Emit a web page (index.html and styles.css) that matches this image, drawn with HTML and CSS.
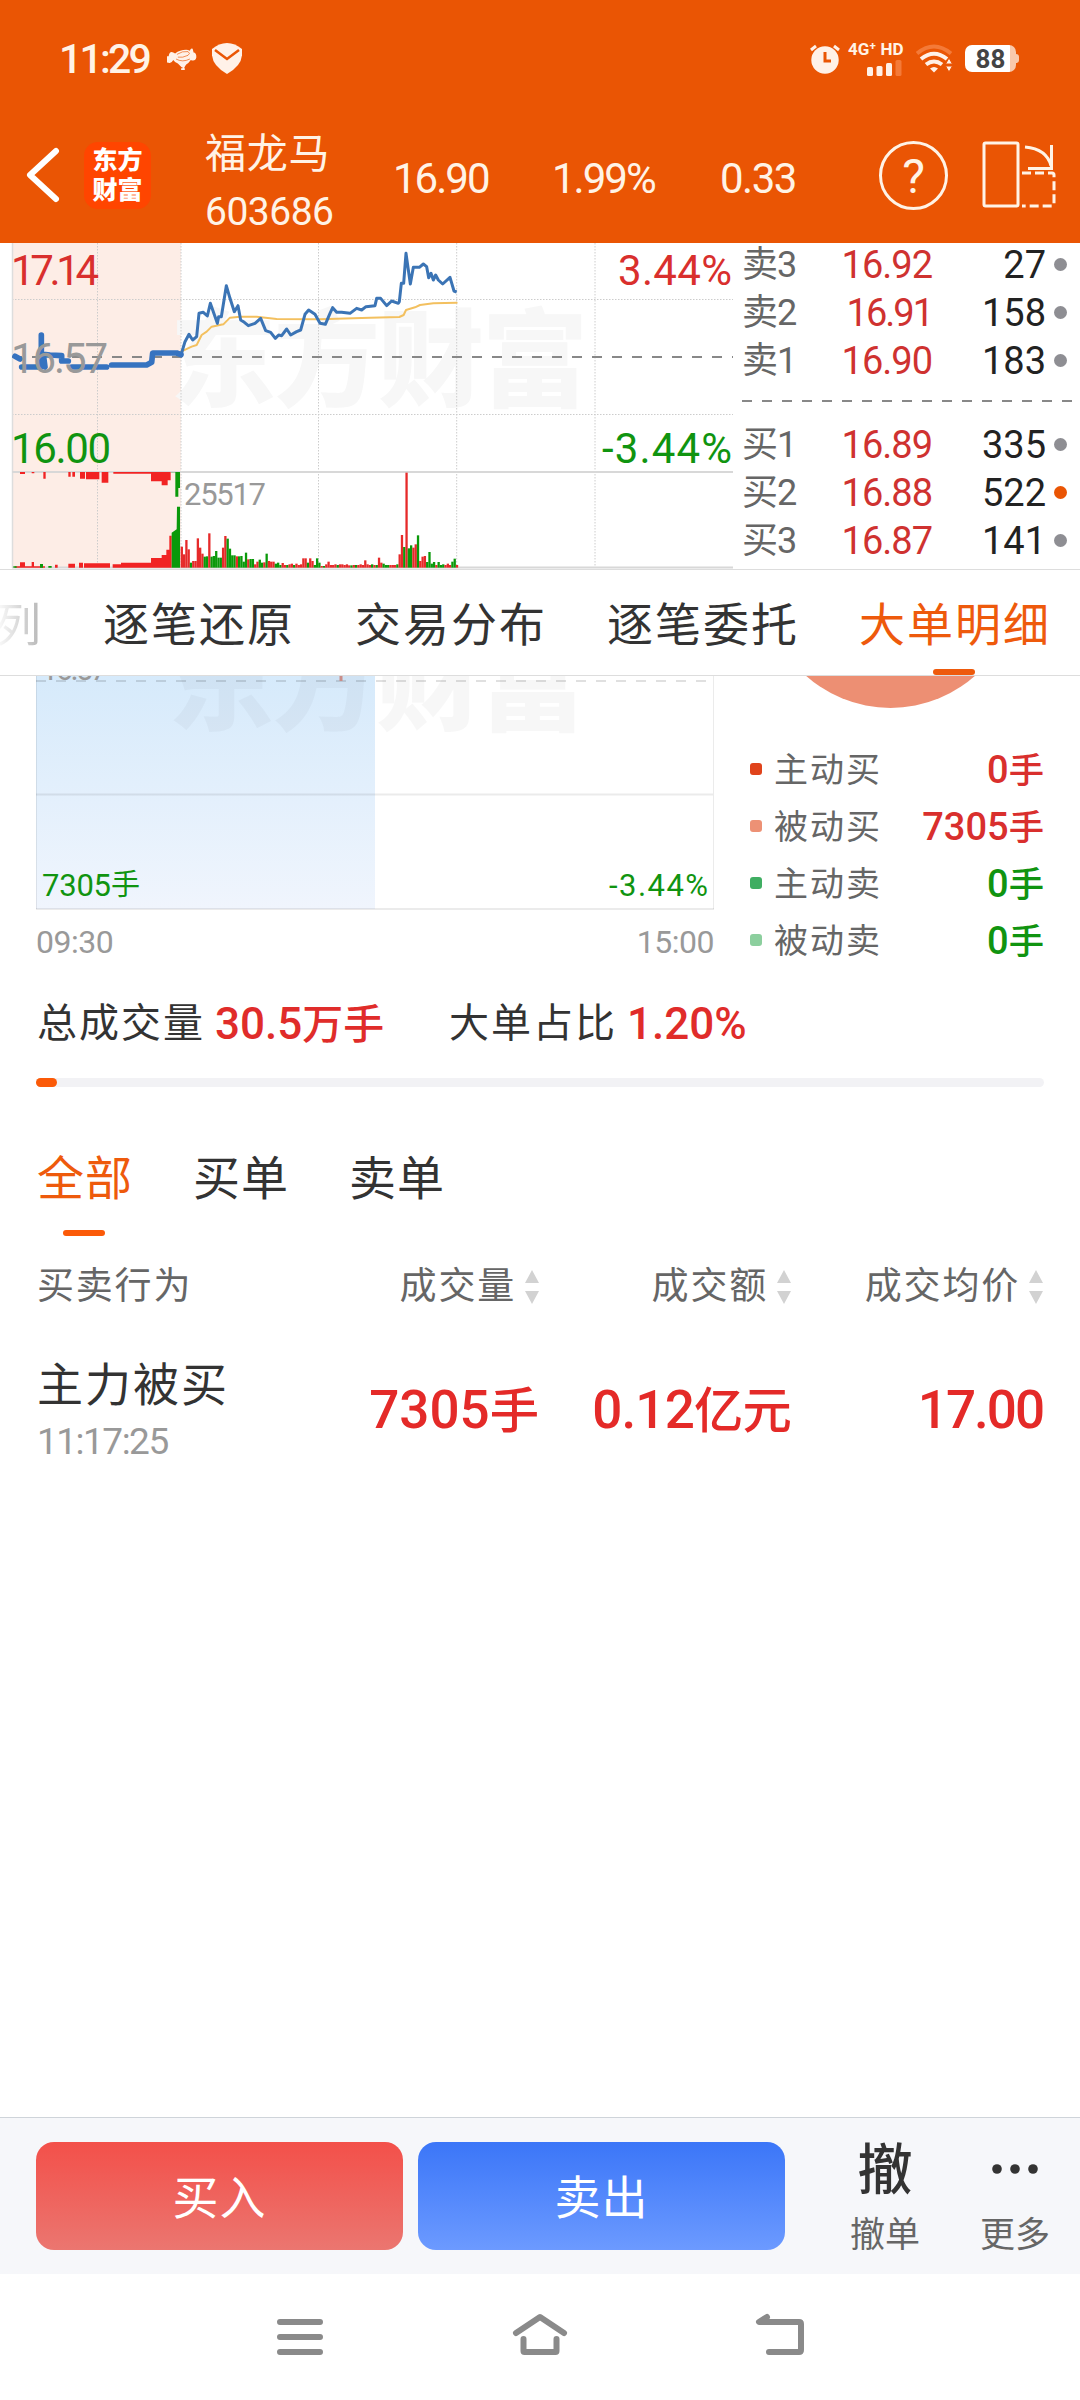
FILE: index.html
```html
<!DOCTYPE html>
<html lang="zh-CN">
<head>
    <meta charset="utf-8" />
    <title>福龙马 603686</title>
    <link rel="stylesheet" href="styles.css">
</head>
<body>
    <div class="top">
        <div class="status">
            <span class="clock">11:29</span>
            <svg class="dog" width="31" height="24" viewBox="0 0 32 26">
                <path d="M1 10q1-6 5-4l2 1q5-4 12-4 2 0 4 1 1-3 3-2l1 4q3 0 3 5-1 5-6 3-2 3-5 5l-2 3h-3l-4-4q-3-1-5-4-2 4-5 3-4 0-2-7z" fill="#fff1e8"/>
                <path d="M10 8q6-4 12-3 3 2 0 4-6 3-11 2M9 13q7 4 15 0" fill="none" stroke="#ea5504" stroke-width=".7"/>
                <path d="M17 19v5M14.500 24h4" stroke="#fff1e8" stroke-width="2"/>
            </svg>
            <svg class="shield" width="30" height="31" viewBox="0 0 30 31">
                <path d="M0 6Q7 0 15 0t15 6q1 10-4 16-5 6-11 9-6-3-11-9-5-6-4-16z" fill="#fff1e8"/>
                <path d="M3 7l12 9 12-9" fill="none" stroke="#ea5504" stroke-width="2.500"/>
            </svg>
            <span class="space"></span>
            <svg class="alarm" width="30" height="30" viewBox="0 0 30 30">
                <circle cx="15" cy="16" r="13.700" fill="#fff1e8"/>
                <path d="M1 6l5-4M29 6l-5-4" stroke="#fff1e8" stroke-width="3"/>
                <path d="M15 8v9h6" fill="none" stroke="#ea5504" stroke-width="3"/>
            </svg>
            <div class="net">
                <span>4G⁺ HD</span>
                <svg width="36" height="16" viewBox="0 0 36 16" fill="#fff1e8">
                    <rect x="0" y="7" width="6" height="9" rx="1.500"/>
                    <rect x="9.500" y="6" width="6" height="10" rx="1.500"/>
                    <rect x="19" y="3" width="6" height="13" rx="1.500"/>
                    <rect x="28.500" y="0" width="6" height="16" rx="1.500" fill="#f47a38"/>
                </svg>
            </div>
            <svg class="wifi" width="38" height="29" viewBox="0 0 38 29" fill="none" stroke="#fff1e8" stroke-width="4">
                <path d="M1 9.500q17-14 34 0" stroke="#f47a38"/>
                <path d="M5 15q13-10.500 26 0M10 20.500q8-6 16 0"/>
                <path d="M18 28.500l-4-4q4-3 8 0z" fill="#fff1e8" stroke="none"/>
                <path d="M33 14l3.500 6h-7zM33 28l3.500-6h-7z" fill="#fff1e8" stroke="#ea5504" stroke-width="1"/>
            </svg>
            <div class="battery">88</div>
        </div>
        <div class="header">
            <svg class="back" width="36" height="56" viewBox="0 0 36 56"><path d="M31 4L5 28l26 24" fill="none" stroke="#fff" stroke-width="6" stroke-linecap="round" stroke-linejoin="round"/></svg>
            <div class="logo">东方<br>财富</div>
            <div class="stock">
                <div class="name">福龙马</div>
                <div class="code">603686</div>
            </div>
            <span class="quote q1">16.90</span>
            <span class="quote q2">1.99%</span>
            <span class="quote q3">0.33</span>
            <div class="help">?</div>
            <svg class="rotate" width="74" height="70" viewBox="0 0 74 70" fill="none" stroke="#fff3e6" stroke-width="3">
                <rect x="2" y="3" width="34" height="63" rx="1.500"/>
                <path d="M43 7q22 2 26 19M69.500 5v23.500H46"/>
                <path d="M40 33h30q2 0 2 2v29q0 2-2 2H40" stroke-dasharray="9 4"/>
            </svg>
        </div>
    </div>

    <div class="market">
        <svg class="chart" width="740" height="326" viewBox="0 243 740 326">
            <rect x="12" y="243" width="169" height="325" fill="#fdede6"/>
            <text class="mark" x="170" y="398" textLength="418">东方财富</text>
            <path d="M12 299.500H733M12 414.500H733" stroke="#ccc" stroke-dasharray="1.500 1.500"/>
            <path d="M97.500 243V567M181 243V567M318.500 243V567M456.700 243V567M595 243V567" stroke="#ccc" stroke-dasharray="1.500 1.500"/>
            <path d="M12.500 243V568" stroke="#ddd" stroke-width="1.500"/>
            <path d="M12 472H733M12 567.500H733" stroke="#d8d8d8" stroke-width="2"/>
            <path d="M12 357H733" stroke="#888" stroke-width="2" stroke-dasharray="10 10"/>
            <g transform="translate(0 235) scale(.33333)" fill="none" stroke-linejoin="round" stroke-linecap="round">
                <path d="M543 350L575 335 590 330 605 300 620 290 635 275 670 268 690 248 720 245 770 245 830 252 960 253 1110 248 1198 246 1211 240 1218 225 1245 217 1260 210 1300 205 1370 203" stroke="#f3c05f" stroke-width="6"/>
                <path d="M543 360L555 320 567 298 578 315 590 305 597 235 610 232 622 243 631 205 652 265 656 245 664 245 679 152 690 190 703 230 714 212 722 255 733 262 745 272 765 265 782 250 797 287 812 292 826 310 836 300 845 302 860 282 872 300 890 290 902 285 915 238 926 225 945 238 960 265 976 268 990 235 998 218 1010 232 1025 232 1050 235 1070 220 1085 225 1098 215 1125 212 1130 190 1142 190 1160 212 1175 198 1195 205 1198 200 1204 145 1211 145 1218 55 1231 147 1240 97 1258 97 1270 87 1280 95 1286 128 1293 115 1300 135 1307 120 1315 135 1328 147 1350 127 1362 168 1370 171" stroke="#3b74b5" stroke-width="9" stroke-linecap="butt"/>
                <path d="M45 364L60 372M65 396H120M124 300V390L135 396 130 358 150 360 185 362V378L205 378M215 396H320M335 390H440L455 382 458 354H530L543 359" stroke="#3673c0" stroke-width="17"/>
                <g fill="#f12323" stroke="none">
                    <path d="M60 711h15v6h-15zM95 711h8v4h-8zM130 711h7v20h-7zM205 711h7v14h-7zM217 711h8v14h-8zM240 711h15v20h-15zM258 711h40v22h-40zM305 711h20v32h-20zM340 711h113v5h-113zM453 711h32v28h-32zM485 711h18v40h-18zM503 711h9v25h-9z"/>
                    <path d="M45 998h90v-4h-90zM60 998h15v-16h-15zM95 998h7v-17h-7zM165 998h8v-9h-8zM205 998h20v-12h-20zM237 998h12v-15h-12zM252 998h78v-13h-78zM338 998h25v-10h-25zM363 998h92v-15h-92zM453 998h32v-29h-32zM485 998h14v-38h-14zM499 998h9v-54h-9zM508 998h7v-96h-7z"/>
                </g>
                <path d="M513 711h27v48h-5v26h-9v-73h-13zM40 998h10v-4h-10zM120 998h9v-11h-9zM145 998h10v-5h-10zM515 998v-105l15-10 1-68h9v183z" fill="#0a990a"/>
                <g id="volume"></g>
            </g>
            <text class="num red" x="11" y="285" textLength="88">17.14</text>
            <text class="num gray" x="11" y="373" textLength="97">16.57</text>
            <text class="num green" x="11" y="463" textLength="100">16.00</text>
            <text class="num red" x="618" y="285" textLength="114">3.44%</text>
            <text class="num green" x="602" y="463" textLength="130">-3.44%</text>
            <text class="vol" x="184" y="505" textLength="82">25517</text>
        </svg>
        <div class="orders">
            <div class="order"><span>卖3</span><b>16.92</b><em>27</em><i></i></div>
            <div class="order"><span>卖2</span><b class="thin">16.91</b><em>158</em><i></i></div>
            <div class="order"><span>卖1</span><b>16.90</b><em>183</em><i></i></div>
            <svg class="split" width="330" height="36" viewBox="0 0 330 36"><path d="M0 16H330" stroke="#888" stroke-width="2" stroke-dasharray="10 10"/></svg>
            <div class="order"><span>买1</span><b>16.89</b><em>335</em><i></i></div>
            <div class="order"><span>买2</span><b>16.88</b><em>522</em><i class="hot"></i></div>
            <div class="order"><span>买3</span><b>16.87</b><em>141</em><i></i></div>
        </div>
    </div>

    <div class="tabs">
        <span class="tab cut">列</span>
        <span class="tab">逐笔还原</span>
        <span class="tab">交易分布</span>
        <span class="tab">逐笔委托</span>
        <span class="tab on">大单明细</span>
    </div>

    <div class="big">
        <div class="trend">
            <svg width="680" height="235" viewBox="36 676 680 235">
                <defs>
                    <linearGradient id="sky" x1="0" y1="0" x2="0" y2="1">
                        <stop offset="0" stop-color="#d6eafb"/>
                        <stop offset="1" stop-color="#f0f5fd"/>
                    </linearGradient>
                </defs>
                <rect x="36" y="676" width="339" height="233" fill="url(#sky)"/>
                <text class="mark dark" x="168" y="722" textLength="418">东方财富</text>
                <path d="M36 681H713" stroke="#000" stroke-opacity=".12" stroke-width="2" stroke-dasharray="10 10"/>
                <path d="M36 794.500H713M36 909H714" stroke="#000" stroke-opacity=".08" stroke-width="2"/>
                <path d="M36.500 676V909M713.500 676V909" stroke="#000" stroke-opacity=".08"/>
                <path d="M341 676v5" stroke="#c98d88" stroke-width="3"/>
                <text class="small gray" x="41" y="680" textLength="67">16.57</text>
                <text class="small green" x="42" y="896" textLength="69">7305</text>
                <text class="hand green" x="111" y="895">手</text>
                <text class="small green" x="609" y="896" textLength="99">-3.44%</text>
            </svg>
            <div class="times"><span>09:30</span><span>15:00</span></div>
        </div>
        <div class="share">
            <svg width="294" height="34" viewBox="750 676 294 34"><circle cx="890.500" cy="581" r="127" fill="#ed8f73"/></svg>
            <ul>
                <li class="c1"><span>主动买</span><b>0<small>手</small></b></li>
                <li class="c2"><span>被动买</span><b>7305<small>手</small></b></li>
                <li class="c3"><span>主动卖</span><b>0<small>手</small></b></li>
                <li class="c4"><span>被动卖</span><b>0<small>手</small></b></li>
            </ul>
        </div>
    </div>

    <div class="total">
        <span>总成交量</span><b class="t1">30.5<small>万手</small></b>
        <span>大单占比</span><b>1.20%</b>
    </div>
    <div class="progress"><div class="done"></div></div>

    <div class="kinds">
        <span class="on">全部</span><span>买单</span><span>卖单</span>
    </div>

    <div class="grid head">
        <span>买卖行为</span>
        <span class="sort">成交量<i></i></span>
        <span class="sort">成交额<i></i></span>
        <span class="sort">成交均价<i></i></span>
    </div>
    <div class="grid row">
        <div>
            <div class="act">主力被买</div>
            <div class="time">11:17:25</div>
        </div>
        <b>7305<small>手</small></b>
        <b>0.12<small>亿元</small></b>
        <b class="thin">17.00</b>
    </div>

    <div class="trade">
        <div class="btn buy">买入</div>
        <div class="btn sell">卖出</div>
        <div class="tool"><strong>撤</strong><span>撤单</span></div>
        <div class="tool more">
            <svg width="50" height="54" viewBox="0 0 50 54" fill="#333"><circle cx="7" cy="27" r="4.800"/><circle cx="25" cy="27" r="4.800"/><circle cx="43" cy="27" r="4.800"/></svg>
            <span>更多</span>
        </div>
    </div>
    <div class="nav">
        <svg width="54" height="44" viewBox="0 0 54 44"><path d="M8 9H48M8 24H48M8 39H48"/></svg>
        <svg width="58" height="44" viewBox="0 0 58 44"><path d="M5 20L29 4l24 16M12.500 26V38q0 1 1 1h31q1 0 1-1V26"/></svg>
        <svg width="54" height="44" viewBox="0 0 54 44"><path d="M13 4L5 9H45q2 0 2 2V37q0 2-2 2H15"/></svg>
    </div>

    <script>
        // 每分钟成交量，负数为绿柱
        var vol = [63, 40, 83, 55, -15, 20, 20, 88, 60, 42, -33, -34, 103, -33, -35, -50, -30, -30, 60, 95,
            -87, -57, -37, -37, 34, -34, -35, -18, -45, 25, -26, -26, 10, 18, -24, -15, 16, -42, 20, 18,
            18, -12, -15, -8, 14, 8, -8, 10, 12, -8, 12, 8, 10, 28, 28, -15, 28, 20, -8, -28,
            -15, 5, -5, 10, 18, 8, 8, 10, -8, 10, 10, 8, 10, 7, -7, 8, -8, 8, 10, 8,
            22, 10, 8, -10, 8, -8, 30, 15, -12, -8, -8, 8, 8, 8, -10, 40, 98, -62, 285, -58,
            -67, 60, 70, -97, 20, 33, 35, -17, -47, -12, -17, 8, -17, -8, -10, 8, 12, 8, -18, -27, 8];
        var bars = "";
        for (var i = 0; i < vol.length; i++) {
            var h = Math.abs(vol[i]);
            bars += '<rect x="' + (542 + i * 6.88) + '" y="' + (998 - h) + '" width="6.9" height="' + h + '" fill="' + (vol[i] < 0 ? "#0a990a" : "#e62a2a") + '"/>';
        }
        document.getElementById("volume").innerHTML = bars;
    </script>
</body>
</html>
```
FILE: styles.css
```css
body {
    margin: 0;
    width: 1080px;
    height: 2400px;
    overflow: hidden;
    background: #fff;
    color: #333;
    font-family: Roboto, "Noto Sans CJK SC", sans-serif;
}

b, em, i {
    font-weight: 400;
    font-style: normal;
}

.top {
    height: 243px;
    background: #ea5504;
    color: #fff3e6;
}

.status {
    display: flex;
    align-items: center;
    height: 117px;
    padding: 0 64px 0 59px;
}

.clock {
    width: 108px;
    font-size: 41px;
    font-weight: 500;
    letter-spacing: -2.8px;
    white-space: nowrap;
}

.shield {
    margin-left: 14px;
}

.space {
    flex: 1;
}

.net {
    width: 60px;
    margin: 0 8px;
    height: 34px;
}

.net span {
    display: block;
    height: 18px;
    line-height: 14px;
    font-size: 17px;
    font-weight: 700;
    white-space: nowrap;
}

.net svg {
    display: block;
    margin-left: 19px;
}

.battery {
    position: relative;
    width: 51px;
    height: 27px;
    margin-left: 11px;
    border-radius: 7px;
    background: linear-gradient(to right, #fff 88%, #f9c9ac 88%);
    color: #444;
    font-size: 26px;
    font-weight: 700;
    line-height: 29px;
    text-align: center;
}

.battery::after {
    content: "";
    position: absolute;
    right: -3px;
    top: 9px;
    width: 3px;
    height: 9px;
    border-radius: 0 3px 3px 0;
    background: #f9c9ac;
}

.header {
    display: flex;
    align-items: center;
    height: 116px;
    padding-left: 25px;
}

.logo {
    width: 67px;
    height: 60px;
    padding: 4px 0 3px;
    margin-left: 23px;
    border-radius: 14px;
    background: #ff4500;
    color: #fff;
    font-size: 25px;
    font-weight: 900;
    line-height: 30px;
    text-align: center;
}

.stock {
    width: 188px;
    margin-left: 54px;
    padding-top: 15px;
}

.name {
    height: 59px;
    line-height: 59px;
    font-size: 41px;
    letter-spacing: 0.8px;
}

.code {
    height: 56px;
    line-height: 56px;
    font-size: 39px;
    letter-spacing: -0.5px;
}

.quote {
    padding-top: 6px;
    font-size: 42px;
    letter-spacing: -2px;
    white-space: nowrap;
}

.q1 { width: 159px; }
.q2 { width: 168px; }
.q3 { width: 159px; letter-spacing: -1.500px; }

.help {
    width: 63px;
    height: 63px;
    border: 3px solid #fff3e6;
    border-radius: 50%;
    font-size: 48px;
    line-height: 66px;
    text-align: center;
}

.rotate {
    margin-left: 34px;
}

.market {
    display: flex;
    height: 326px;
    border-bottom: 1px solid #ddd;
}

.chart {
    flex: none;
}

.mark {
    font-size: 106px;
    font-weight: 900;
    fill: #f7f7f7;
}

.mark.dark {
    fill: #000;
    fill-opacity: .03;
}

.num { font-size: 42px; }
.vol { font-size: 31px; fill: #999; }
.small { font-size: 31px; }
.hand { font-size: 29px; }
.red { fill: #d92f2d; }
.green { fill: #109410; }
.gray { fill: #999; }

.orders {
    width: 330px;
    padding: 0 8px 0 2px;
}

.order {
    display: flex;
    align-items: center;
    height: 48px;
    line-height: 48px;
    font-size: 38px;
}

.orders .order:first-child {
    margin-top: -2px;
}

.order span {
    width: 70px;
    font-size: 36px;
    letter-spacing: -1px;
    color: #666;
    white-space: nowrap;
}

.order b {
    width: 120px;
    text-align: right;
    color: #cf3230;
    letter-spacing: -1px;
}

.order .thin {
    letter-spacing: -2px;
}

.order em {
    width: 114px;
    text-align: right;
    color: #222;
}

.order i {
    width: 13px;
    height: 13px;
    margin: -2px 0 0 8px;
    border-radius: 50%;
    background: #8e8e93;
}

.order .hot {
    background: #ea5504;
}

.split {
    display: block;
}

.tabs {
    display: flex;
    justify-content: flex-end;
    gap: 60px;
    height: 105px;
    padding-right: 29px;
    border-bottom: 1px solid #ddd;
    overflow: hidden;
}

.tab {
    position: relative;
    flex: none;
    width: 192px;
    line-height: 110px;
    font-size: 46px;
    letter-spacing: 2px;
}

.tab.cut {
    width: 48px;
    background: linear-gradient(to right, #fff, #bbb 90%);
    background-clip: text;
    -webkit-background-clip: text;
    color: transparent;
}

.tab.on, .kinds .on {
    color: #ee5a0c;
}

.tab.on::after {
    content: "";
    position: absolute;
    left: 74px;
    bottom: 0;
    width: 42px;
    height: 6px;
    border-radius: 3px;
    background: #ee5a0c;
}

.big {
    display: flex;
    height: 294px;
    padding: 0 36px;
}

.trend {
    width: 714px;
}

.trend svg, .share svg {
    display: block;
}

.times {
    display: flex;
    justify-content: space-between;
    width: 678px;
    line-height: 62px;
    font-size: 32px;
    letter-spacing: -0.5px;
    color: #999;
}

.share {
    width: 294px;
}

.share ul {
    margin: 32px 0 0;
    padding: 0;
    list-style: none;
}

.share li {
    display: flex;
    align-items: center;
    height: 57px;
    line-height: 57px;
}

.share li::before {
    content: "";
    width: 12px;
    height: 12px;
    margin: -4px 12px 0 0;
    border-radius: 3px;
    background: #e0431b;
}

.share .c2::before { background: #ed9175; }
.share .c3::before { background: #3fae62; }
.share .c4::before { background: #8ccf9e; }

.share span {
    flex: 1;
    font-size: 34px;
    letter-spacing: 2px;
    color: #666;
}

.share b {
    font-size: 38px;
    font-weight: 500;
    color: #d92f2d;
}

.share .c3 b, .share .c4 b {
    color: #109410;
}

small {
    font-size: .93em;
}

.total {
    display: flex;
    height: 108px;
    padding-left: 37px;
    line-height: 108px;
    font-size: 40px;
}

.total span {
    width: 178px;
    letter-spacing: 2px;
}

.total b {
    font-size: 44px;
    font-weight: 500;
    color: #e02c2a;
}

.total .t1 {
    width: 234px;
}

.progress {
    height: 9px;
    margin: 0 36px;
    border-radius: 5px;
    background: #f2f2f5;
}

.done {
    width: 21px;
    height: 9px;
    border-radius: 5px;
    background: #fb5a08;
}

.kinds {
    display: flex;
    height: 149px;
    padding-left: 37px;
    gap: 60px;
    line-height: 183px;
    font-size: 47px;
    letter-spacing: 1px;
}

.kinds span {
    position: relative;
}

.kinds .on::after {
    content: "";
    position: absolute;
    left: 26px;
    bottom: 0;
    width: 42px;
    height: 6px;
    border-radius: 3px;
    background: #fb5a08;
}

.grid {
    display: grid;
    grid-template-columns: 250px 252px 252px 252px;
    padding-left: 37px;
}

.head {
    height: 100px;
    line-height: 102px;
    font-size: 37px;
    letter-spacing: 1.800px;
    color: #666;
}

.sort {
    display: flex;
    justify-content: flex-end;
    align-items: center;
}

.sort i {
    width: 14px;
    height: 34px;
    margin-left: 9px;
    background: #d2d2d2;
    clip-path: polygon(50% 0, 100% 38%, 0 38%, 50% 0, 50% 100%, 100% 62%, 0 62%, 50% 100%);
}

.row {
    height: 781px;
}

.act {
    height: 56px;
    padding-top: 21px;
    line-height: 56px;
    font-size: 46px;
    letter-spacing: 2px;
}

.time {
    line-height: 57px;
    font-size: 37px;
    letter-spacing: -1.500px;
    color: #999;
}

.row b {
    line-height: 149px;
    font-size: 53px;
    font-weight: 500;
    text-align: right;
    color: #e42a28;
    white-space: nowrap;
}

.row b:nth-child(3) {
    letter-spacing: -0.8px;
}

.row .thin {
    letter-spacing: -2px;
}

.trade {
    display: flex;
    height: 132px;
    padding: 24px 0 0 36px;
    border-top: 1px solid #cfd4da;
    background: #f6f7fa;
}

.btn {
    width: 367px;
    height: 108px;
    margin-right: 15px;
    border-radius: 18px;
    color: #fff;
    font-size: 46px;
    line-height: 112px;
    letter-spacing: 1px;
    text-align: center;
}

.buy { background: linear-gradient(#f3504a, #eb7670); }
.sell { background: linear-gradient(#3b76f8, #6c9aff); }

.tool {
    display: flex;
    flex-direction: column;
    align-items: center;
    width: 130px;
    margin-left: 20px;
}

.tool strong {
    height: 54px;
    line-height: 56px;
    font-size: 55px;
    font-weight: 500;
}

.tool.more {
    margin-left: 0;
}

.tool span {
    margin-top: 19px;
    line-height: 42px;
    font-size: 35px;
    color: #666;
}

.nav {
    display: flex;
    justify-content: center;
    gap: 185px;
    height: 126px;
    padding-top: 39px;
    box-sizing: border-box;
}

.nav path {
    fill: none;
    stroke: #8a8a8a;
    stroke-width: 6;
    stroke-linecap: round;
    stroke-linejoin: round;
}
```
